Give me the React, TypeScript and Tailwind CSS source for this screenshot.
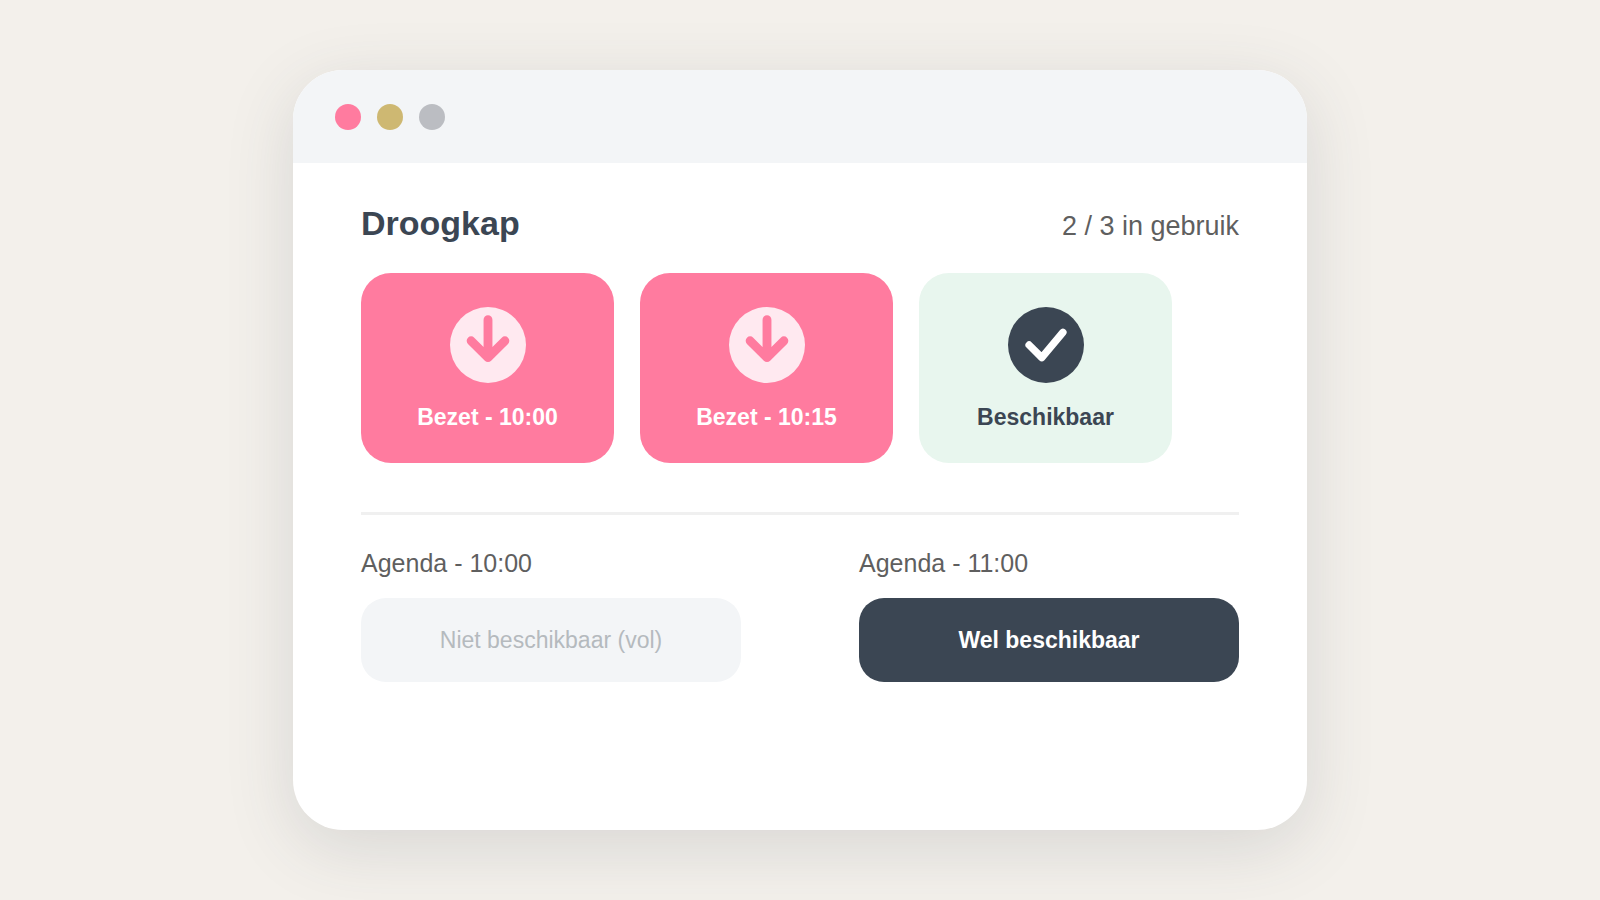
import React from "react";

const dryers = [
  { label: "Bezet - 10:00", busy: true },
  { label: "Bezet - 10:15", busy: true },
  { label: "Beschikbaar", busy: false },
];

const slots = [
  { time: "Agenda - 10:00", label: "Niet beschikbaar (vol)", full: true },
  { time: "Agenda - 11:00", label: "Wel beschikbaar", full: false },
];

function BusyIcon() {
  return (
    <svg viewBox="0 0 36 36" className="h-19 w-19" fill="none" aria-hidden="true">
      <circle cx="18" cy="18" r="18" fill="#ffe9f0" />
      <path
        d="M18 6v18M10 16l8 8 8-8"
        stroke="#ff7b9f"
        strokeWidth="4.2"
        strokeLinecap="round"
        strokeLinejoin="round"
      />
    </svg>
  );
}

function FreeIcon() {
  return (
    <svg viewBox="0 0 36 36" className="h-19 w-19" fill="none" aria-hidden="true">
      <circle cx="18" cy="18" r="18" fill="#3b4653" />
      <path
        d="M10 18l6 6 10-12"
        stroke="#ffffff"
        strokeWidth="3.5"
        strokeLinecap="round"
        strokeLinejoin="round"
      />
    </svg>
  );
}

function App() {
  return (
    <main className="flex min-h-screen items-center justify-center bg-[#f3f0eb] p-10 font-['Liberation_Sans',Arial,sans-serif]">
      <div className="flex min-h-[760px] w-full max-w-[1014px] flex-col overflow-hidden rounded-[50px] bg-white shadow-[0_17px_68px_rgba(59,70,83,0.15)]">
        {/* Window bar */}
        <div className="flex h-[93px] items-center gap-4 bg-[#f3f5f7] px-[42px]">
          <span className="h-[26px] w-[26px] rounded-full bg-[#ff7b9f]" />
          <span className="h-[26px] w-[26px] rounded-full bg-[#ceb872]" />
          <span className="h-[26px] w-[26px] rounded-full bg-[#bbbdc2]" />
        </div>

        <div className="px-[68px] pt-10">
          <div className="flex items-baseline justify-between">
            <h1 className="text-[34px] leading-10 font-bold text-[#3b4653]">Droogkap</h1>
            <p className="text-[27px] leading-10 text-[#5f5f5f]">2 / 3 in gebruik</p>
          </div>

          <ul className="mt-[27px] flex flex-wrap gap-[26px]">
            {dryers.map((dryer) => (
              <li
                key={dryer.label}
                className={`flex w-[253px] flex-col items-center rounded-[30px] pt-[34px] pb-8 ${
                  dryer.busy ? "bg-[#ff7b9f] text-white" : "bg-[#e8f6ee] text-[#3b4653]"
                }`}
              >
                {dryer.busy ? <BusyIcon /> : <FreeIcon />}
                <span className="mt-5 text-[23px] leading-7 font-bold">{dryer.label}</span>
              </li>
            ))}
          </ul>

          <hr className="mt-[49px] border-t-3 border-[#f0f0f0]" />

          <div className="mt-8 flex flex-wrap justify-between gap-8">
            {slots.map((slot) => (
              <div key={slot.time} className="flex w-[380px] flex-col gap-[19px]">
                <h2 className="text-[25px] leading-8 text-[#5f5f5f]">{slot.time}</h2>
                <button
                  type="button"
                  disabled={slot.full}
                  className={`h-[84px] rounded-[25px] text-[23px] ${
                    slot.full ? "bg-[#f3f5f7] text-[#b5babe]" : "bg-[#3b4653] font-bold text-white"
                  }`}
                >
                  {slot.label}
                </button>
              </div>
            ))}
          </div>
        </div>
      </div>
    </main>
  );
}

export default App;
